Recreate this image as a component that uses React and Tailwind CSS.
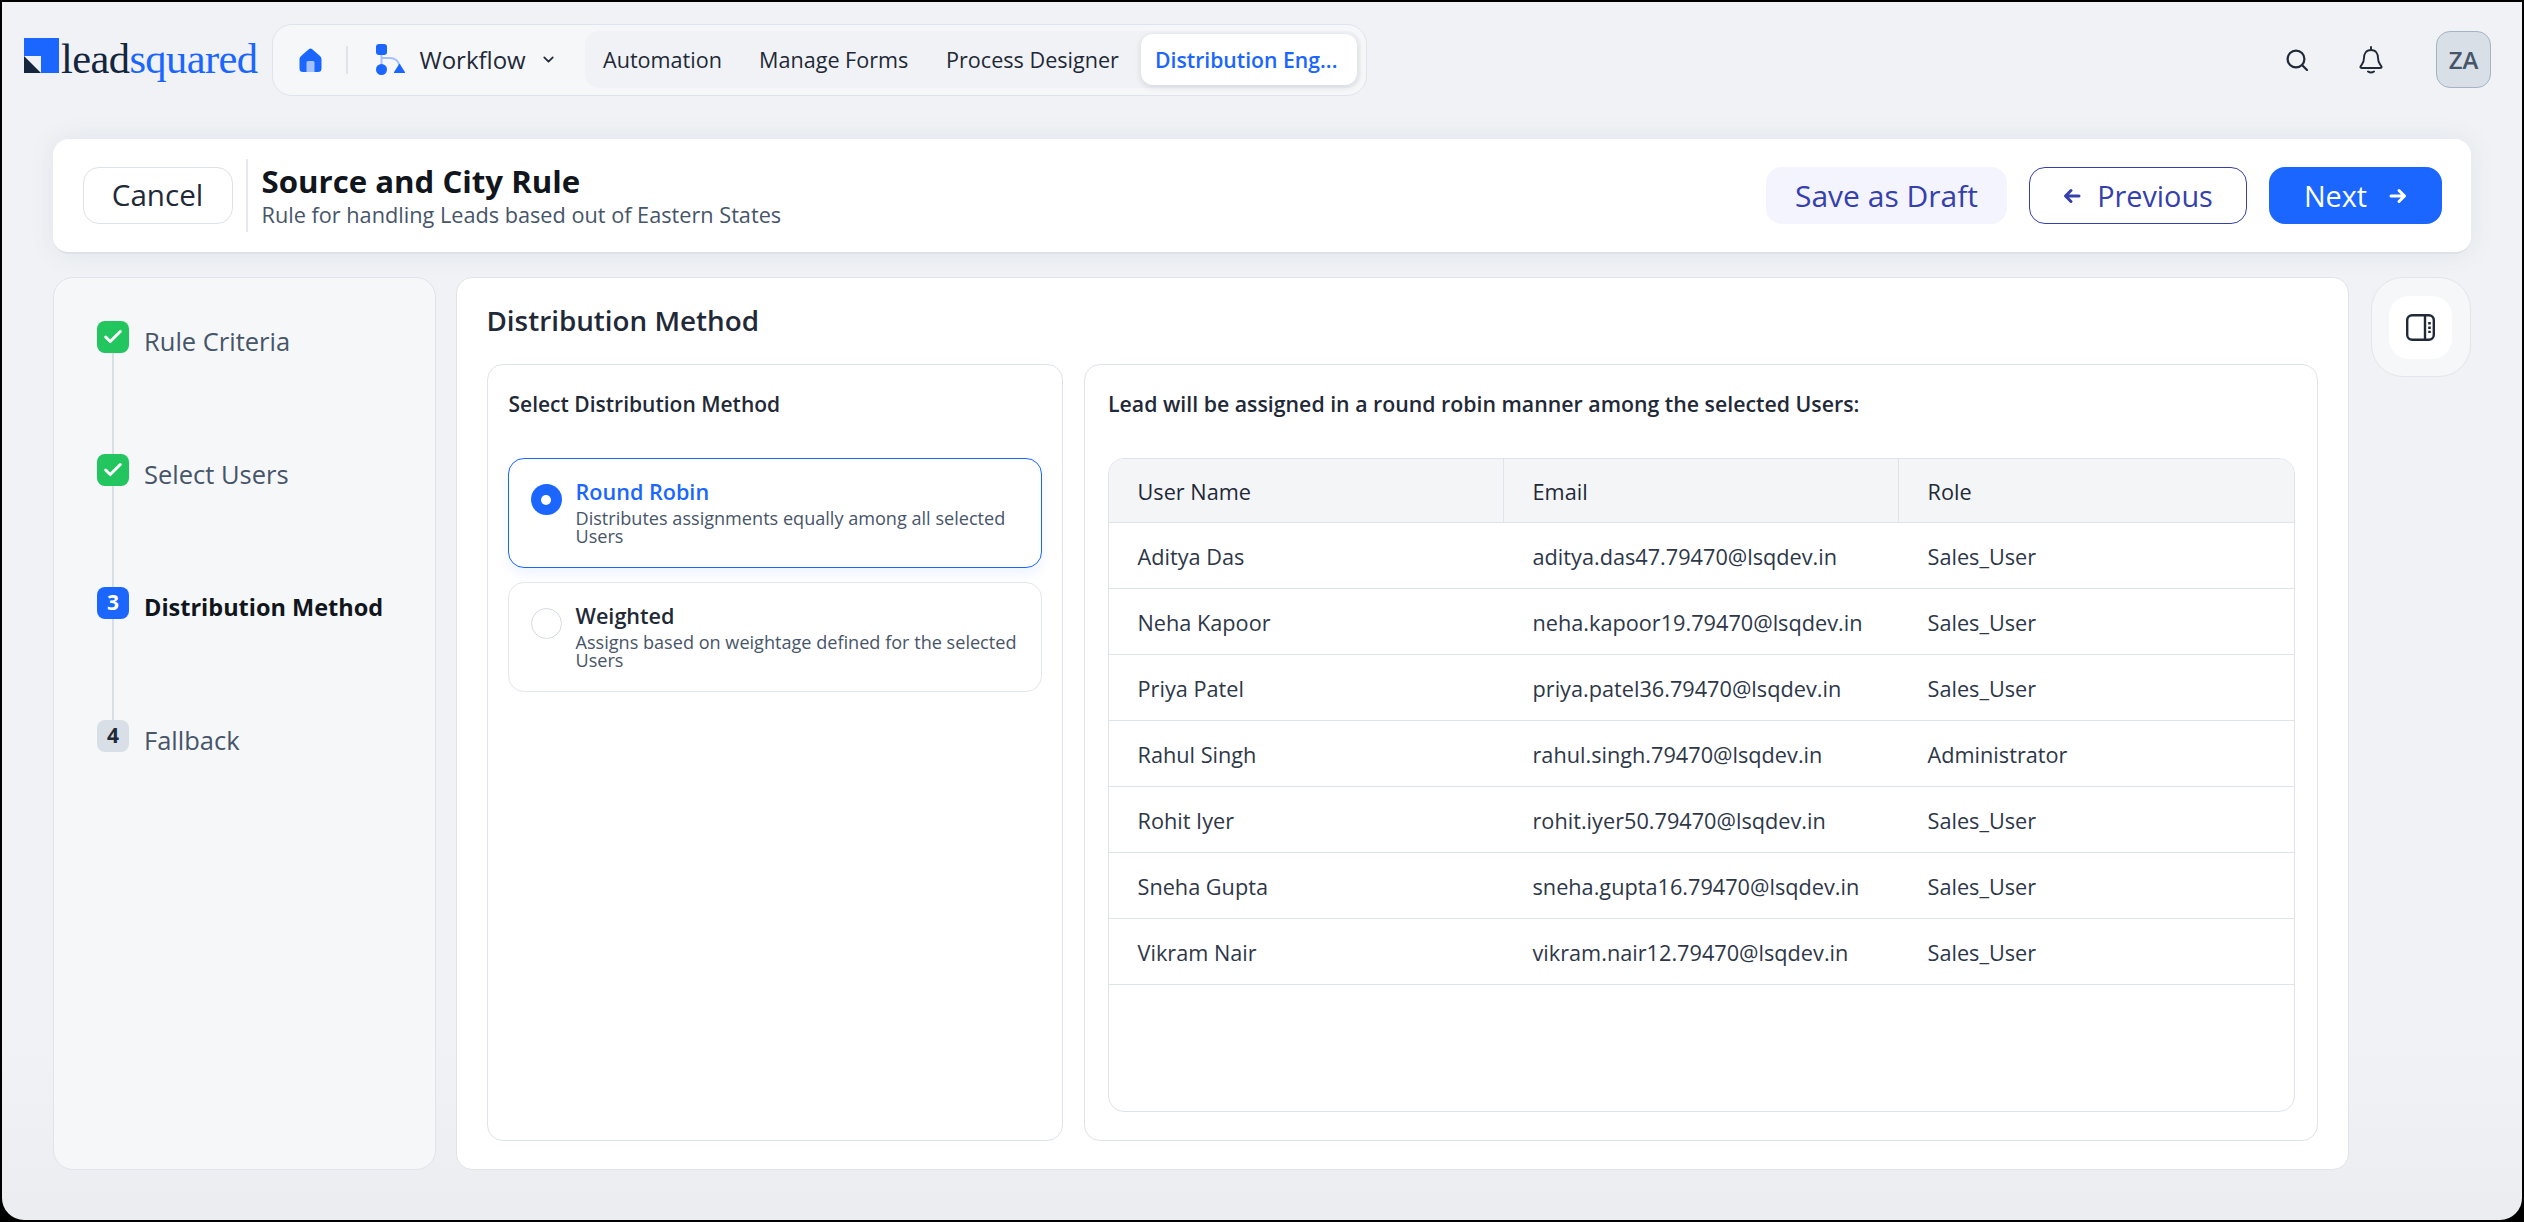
import { Check, ChevronDown } from "lucide-react";

const users = [
  ["Aditya Das", "aditya.das47.79470@lsqdev.in", "Sales_User"],
  ["Neha Kapoor", "neha.kapoor19.79470@lsqdev.in", "Sales_User"],
  ["Priya Patel", "priya.patel36.79470@lsqdev.in", "Sales_User"],
  ["Rahul Singh", "rahul.singh.79470@lsqdev.in", "Administrator"],
  ["Rohit Iyer", "rohit.iyer50.79470@lsqdev.in", "Sales_User"],
  ["Sneha Gupta", "sneha.gupta16.79470@lsqdev.in", "Sales_User"],
  ["Vikram Nair", "vikram.nair12.79470@lsqdev.in", "Sales_User"],
];

const steps = [
  { label: "Rule Criteria", state: "done" },
  { label: "Select Users", state: "done" },
  { label: "Distribution Method", n: 3, state: "active" },
  { label: "Fallback", n: 4, state: "todo" },
];

const HomeIcon = () => (
  <svg width="23" height="24" viewBox="0 0 23 24">
    <path d="M9.8 1.2 Q11.5 -0.2 13.2 1.2 L21 8 Q22.5 9.3 22.5 11 V20.5 Q22.5 24 19 24 H4 Q0.5 24 0.5 20.5 V11 Q0.5 9.3 2 8 Z" fill="#1a66ff" />
    <path d="M7.5 24 V14.5 Q7.5 13 9 13 H14 Q15.5 13 15.5 14.5 V24 Z" fill="#a3c1ff" />
  </svg>
);

const WorkflowIcon = () => (
  <svg width="30" height="31" viewBox="0 0 30 31">
    <path d="M5.5 10 V22 M5.5 14 H14 Q21 14 23.5 21" fill="none" stroke="#a3c1ff" strokeWidth="2" />
    <rect x="0" y="0" width="11" height="11" rx="3" fill="#1a66ff" />
    <circle cx="5.5" cy="25.5" r="5.5" fill="#1a66ff" />
    <path d="M23.5 20.5 L28.5 28.5 H18.5 Z" fill="#1a66ff" strokeLinejoin="round" stroke="#1a66ff" strokeWidth="1.2" />
  </svg>
);

const SearchIcon = () => (
  <svg width="23" height="22" viewBox="0 0 23 22" fill="none" stroke="#1f2937" strokeWidth="2.2" strokeLinecap="round">
    <circle cx="10" cy="10" r="8.4" />
    <path d="M16.5 16.5 L21 21" />
  </svg>
);

const BellIcon = () => (
  <svg width="24" height="28" viewBox="0 0 24 28" fill="none" stroke="#1f2937" strokeWidth="1.9" strokeLinecap="round" strokeLinejoin="round">
    <path d="M12 1 V4 M12 4 C7 4 5 8 5 12 C5 17 3 18 1.5 20.5 Q1 22 3 22 H21 Q23 22 22.5 20.5 C21 18 19 17 19 12 C19 8 17 4 12 4 Z" />
    <path d="M9 25.5 Q12 27.5 15 25.5" />
  </svg>
);

const PanelIcon = () => (
  <svg width="29" height="27" viewBox="0 0 29 27" fill="none" stroke="#1f2937" strokeWidth="2.4">
    <rect x="1.2" y="1.2" width="26.6" height="24.6" rx="5" />
    <path d="M19 1.2 V25.8" />
    <path d="M23.5 8 V19" strokeWidth="2.6" strokeDasharray="2.6 1.8" />
  </svg>
);

const ArrowIcon = ({ left, color }) => (
  <svg width="18" height="18" viewBox="0 0 18 18" fill="none" stroke={color} strokeWidth="3" strokeLinecap="round" strokeLinejoin="round" className={left ? "rotate-180" : ""}>
    <path d="M2 9 H15 M10 3.5 L15.5 9 L10 14.5" />
  </svg>
);

const StepBadge = ({ step }) => {
  if (step.state === "done") {
    return (
      <div className="w-8 h-8 shrink-0 rounded-lg bg-[#22c55e] flex items-center justify-center">
        <Check size={22} color="#ffffff" strokeWidth={3.2} />
      </div>
    );
  }
  if (step.state === "active") {
    return <div className="w-8 h-8 shrink-0 rounded-lg bg-[#1a66ff] text-white font-bold text-[21px] flex items-center justify-center">{step.n}</div>;
  }
  return <div className="w-8 h-8 shrink-0 rounded-lg bg-[#d8dfe7] text-[#1f2937] font-bold text-[21px] flex items-center justify-center">{step.n}</div>;
};

const MethodOption = ({ title, desc, selected }) => (
  <div className={selected ? "h-[110px] rounded-2xl border-[1.5px] border-[#1a66ff] bg-white shadow-[0_6px_12px_rgba(26,102,255,0.08)] flex items-start pl-[22px] pt-[19px] gap-[14px]" : "h-[110px] rounded-2xl border-[1.5px] border-[#e2e6ed] bg-white flex items-start pl-[22px] pt-[19px] gap-[14px]"}>
    {selected ? (
      <div className="w-[31px] h-[31px] mt-[6px] shrink-0 rounded-full bg-[#1a66ff] flex items-center justify-center">
        <div className="w-[10px] h-[10px] rounded-full bg-white" />
      </div>
    ) : (
      <div className="w-[31px] h-[31px] mt-[6px] shrink-0 rounded-full border-[1.5px] border-[#d5dae2] bg-white" />
    )}
    <div className="pr-[16px]">
      <div className={selected ? "text-[21.6px] leading-[28px] font-semibold text-[#1a66ff]" : "text-[21.6px] leading-[28px] font-semibold text-[#1f2937]"}>{title}</div>
      <div className="text-[18.1px] leading-[18px] mt-[3px] text-[#475569]">{desc}</div>
    </div>
  </div>
);

export default function App() {
  return (
    <div className="w-full h-screen bg-black overflow-hidden font-['Open_Sans',sans-serif]">
      <div className="h-full border-2 border-black rounded-b-[24px] bg-gradient-to-b from-[#f0f2f5] from-85% to-[#ebedf0] flex flex-col">
        {/* top bar */}
        <div className="flex items-center h-[71.5px] mt-[22px] pl-[22px] pr-[31px]">
          <div className="w-[248px] flex items-end gap-[2px] h-[42px] -mt-[2px] shrink-0">
            <div className="w-[35px] h-[35px] bg-[#1a66ff] relative mb-[7px] shrink-0">
              <div className="absolute left-0 bottom-0 w-[17px] h-[17px] bg-[#f0f2f5]" />
              <div className="absolute left-0 bottom-0 w-0 h-0 border-l-[17px] border-l-[#14263d] border-t-[17px] border-t-transparent" />
            </div>
            <div className="text-[42.5px] leading-[42px] tracking-[-0.6px] font-['Liberation_Serif',serif] text-[#14263d]">
              lead<span className="text-[#1a66ff]">squared</span>
            </div>
          </div>

          <div className="w-[1095px] h-[71.5px] rounded-[20px] border-[1.5px] border-[#dfe3eb] bg-[#f6f7f9] flex items-center pr-[5px] shrink-0">
            <div className="ml-[25.5px]"><HomeIcon /></div>
            <div className="w-[2px] h-[28px] bg-[#dfe3eb] ml-[24px] mr-[28px]" />
            <WorkflowIcon />
            <span className="ml-[14px] text-[24px] font-medium text-[#1f2937]">Workflow</span>
            <ChevronDown size={17} color="#1f2937" strokeWidth={2.4} className="ml-[14px]" />
            <div className="ml-auto w-[776px] h-[57px] rounded-[14px] bg-[#f0f2f5] flex items-center pl-[18px] pr-[4px] text-[21.6px] font-medium text-[#1f2937]">
              <span className="w-[156px]">Automation</span>
              <span className="w-[187px]">Manage Forms</span>
              <span>Process Designer</span>
              <div className="ml-auto w-[216px] h-[51px] rounded-[12px] bg-white shadow-[0_2px_6px_rgba(30,41,59,0.14)] flex items-center pl-[14px] text-[21.2px] font-semibold text-[#1a66ff]">
                Distribution Eng...
              </div>
            </div>
          </div>

          <div className="ml-auto flex items-center">
            <SearchIcon />
            <div className="ml-[50px]"><BellIcon /></div>
            <div className="ml-[53px] w-[55px] h-[57px] rounded-[14px] border-[1.5px] border-[#a6b3c4] bg-[#d8dfe7] flex items-center justify-center text-[24px] font-semibold text-[#475569]">
              ZA
            </div>
          </div>
        </div>

        {/* rule header */}
        <div className="mx-[51px] mt-[43.5px] h-[115px] rounded-[16px] bg-white border-b-2 border-[#dde1e8] shadow-[0_0_24px_rgba(100,116,139,0.1)] flex items-center pl-[29.5px] pr-[29px]">
          <button className="w-[150px] h-[57px] rounded-[16px] border-[1.5px] border-[#dde2ea] text-[29.6px] font-medium text-[#1f2937]">Cancel</button>
          <div className="w-[2px] h-[73px] bg-[#e6e9ef] ml-[13px] mr-[14px]" />
          <div>
            <div className="text-[31.2px] leading-[38px] font-bold text-[#11151c]">Source and City Rule</div>
            <div className="text-[21.7px] leading-[28px] pt-[1px] text-[#475569]">Rule for handling Leads based out of Eastern States</div>
          </div>
          <div className="ml-auto flex items-center gap-[22px] text-[28.8px] font-medium">
            <button className="w-[241px] h-[57px] rounded-[16px] bg-[#f3f4fd] text-[30px] text-[#3540ac]">Save as Draft</button>
            <button className="w-[218px] h-[57px] rounded-[16px] border-[1.5px] border-[#3540ac] flex items-center justify-center gap-[16px] text-[#3540ac]">
              <ArrowIcon left color="#3540ac" />
              Previous
            </button>
            <button className="w-[173px] h-[57px] rounded-[16px] bg-[#1a66ff] flex items-center justify-center gap-[22px] text-white">
              Next
              <ArrowIcon color="#ffffff" />
            </button>
          </div>
        </div>

        {/* body */}
        <div className="mx-[51px] mt-[23px] h-[893px] flex items-start">
          <div className="w-[383px] h-full rounded-[20px] border-[1.5px] border-[#dfe3eb] bg-[#f6f7f9] pl-[43px] pt-[43px] shrink-0">
            {steps.map((step, i) => (
              <div key={step.label} className="h-[133px] flex items-start gap-[15px] relative">
                {i < 3 && <div className="absolute left-[15px] top-[32px] w-[2px] h-[101px] bg-[#d8dfe7]" />}
                <StepBadge step={step} />
                <div className={step.state === "active" ? "mt-[3px] text-[23.5px] leading-[34px] font-bold text-[#11151c]" : "mt-[3px] text-[25.5px] leading-[34px] text-[#475569]"}>{step.label}</div>
              </div>
            ))}
          </div>

          <div className="ml-[20px] w-[1892.5px] h-full rounded-[16px] border-[1.5px] border-[#dfe3eb] bg-white px-[29.5px] pb-[28.5px] flex flex-col">
            <div className="h-[85.5px] flex items-center text-[27.8px] font-semibold text-[#1f2937]">Distribution Method</div>
            <div className="flex-1 flex gap-[21px] min-h-0">
              <div className="w-[576.5px] rounded-[16px] border-[1.5px] border-[#dfe3eb] bg-white px-[20px] shrink-0">
                <div className="pt-[21px] h-[93.5px] pl-[1px] text-[21px] leading-[36px] font-semibold text-[#1f2937]">Select Distribution Method</div>
                <div className="flex flex-col gap-[14px]">
                  <MethodOption selected title="Round Robin" desc="Distributes assignments equally among all selected Users" />
                  <MethodOption title="Weighted" desc="Assigns based on weightage defined for the selected Users" />
                </div>
              </div>

              <div className="flex-1 rounded-[16px] border-[1.5px] border-[#dfe3eb] bg-white pl-[23px] pr-[22px] pb-[28px] flex flex-col">
                <div className="pt-[21px] h-[93.5px] shrink-0 text-[21.3px] leading-[36px] font-semibold text-[#1f2937]">Lead will be assigned in a round robin manner among the selected Users:</div>
                <div className="flex-1 rounded-[16px] border-[1.5px] border-[#dfe3eb] overflow-hidden">
                  <div className="grid grid-cols-3 h-[64px] bg-[#f4f5f7] border-b-[1.5px] border-[#dfe3eb] text-[21.7px] text-[#1f2937]">
                    <div className="flex items-center pl-[28.5px] pt-[4px] border-r-[1.5px] border-[#dfe3eb]">User Name</div>
                    <div className="flex items-center pl-[28.5px] pt-[4px] border-r-[1.5px] border-[#dfe3eb]">Email</div>
                    <div className="flex items-center pl-[28.5px] pt-[4px]">Role</div>
                  </div>
                  {users.map((u) => (
                    <div key={u[0]} className="grid grid-cols-3 h-[66px] border-b-[1.5px] border-[#dfe3eb] text-[21.7px] text-[#2d3748]">
                      <div className="flex items-center pl-[28.5px] pt-[4px]">{u[0]}</div>
                      <div className="flex items-center pl-[28.5px] pt-[4px]">{u[1]}</div>
                      <div className="flex items-center pl-[28.5px] pt-[4px]">{u[2]}</div>
                    </div>
                  ))}
                </div>
              </div>
            </div>
          </div>

          <div className="ml-[22px] w-[100px] h-[100px] rounded-[32px] border-[1.5px] border-[#e2e5eb] bg-[#f6f7f9] flex items-center justify-center">
            <div className="w-[63px] h-[63px] rounded-[20px] bg-white flex items-center justify-center">
              <PanelIcon />
            </div>
          </div>
        </div>
      </div>
    </div>
  );
}
